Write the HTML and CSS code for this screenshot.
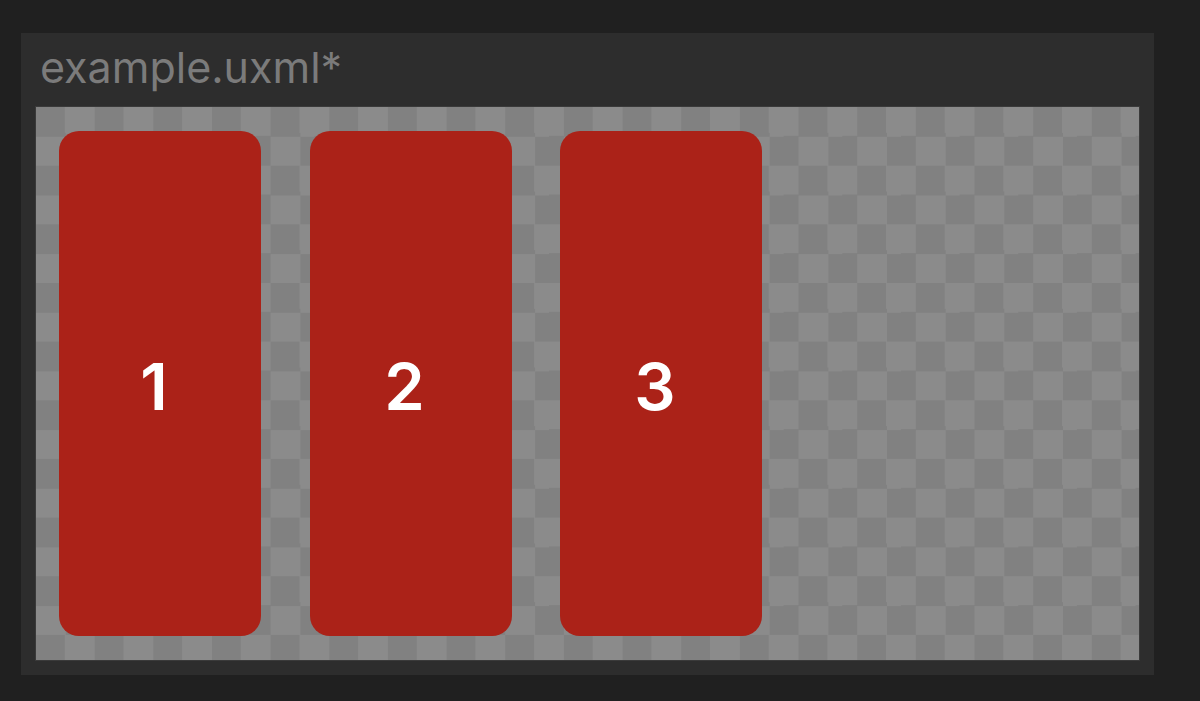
FILE: index.html
```html
<!DOCTYPE html>
<html lang="en">

<head>
  <meta charset="UTF-8">
  <meta name="viewport" content="width=device-width, initial-scale=1.0">
  <title>example.uxml*</title>
  <link rel="stylesheet" href="styles.css">
</head>

<body>
  <div class="panel">
    <div class="panel-title">example.uxml*</div>
    <div class="canvas">
      <div class="card">1</div>
      <div class="card">2</div>
      <div class="card">3</div>
    </div>
  </div>
</body>

</html>
```

FILE: styles.css
```css
body {
  margin: 0;
  background-color: #202020;
  font-family: Inter, "Noto Sans", sans-serif;
  padding: 33px 0 0 21px;
}

.panel {
  width: 1133px;
  height: 642px;
  box-sizing: border-box;
  background-color: #2d2d2d;
  padding: 0 14px 14px 14px;
  display: flex;
  flex-direction: column;
}

.panel-title {
  height: 73px;
  line-height: 69px;
  padding-left: 5px;
  font-size: 43px;
  color: #7b7b7b;
  flex-shrink: 0;
}

.canvas {
  flex: 1;
  display: flex;
  gap: 48.5px;
  padding: 24px 24px 24px 23px;
  border: 1px solid #3a3a3a;
  background: repeating-conic-gradient(#8b8b8b 0 25%, #818181 0 50%) 0 0 / 58.67px 58.67px;
}

.card {
  width: 202px;
  background-color: #ab2218;
  border-radius: 20px;
  display: flex;
  align-items: center;
  justify-content: center;
  color: #fff;
  font-size: 65px;
  font-weight: 600;
  padding: 6px 12px 0 0;
  box-sizing: border-box;
}
```
